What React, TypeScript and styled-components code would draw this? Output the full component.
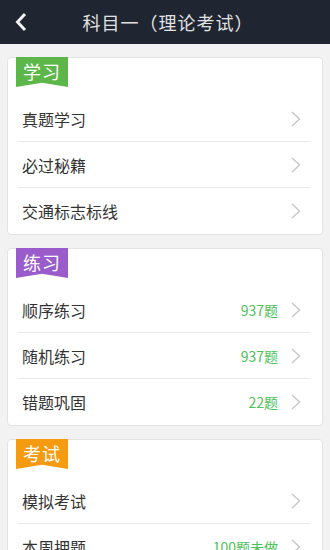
import React from 'react'
import styled, { createGlobalStyle } from 'styled-components'

type Item = { name: string; count?: string }
type Section = { title: string; color: string; items: Item[] }

const sections: Section[] = [
    { title: '学习', color: '#5db64a', items: [{ name: '真题学习' }, { name: '必过秘籍' }, { name: '交通标志标线' }] },
    { title: '练习', color: '#9b5ccb', items: [{ name: '顺序练习', count: '937题' }, { name: '随机练习', count: '937题' }, { name: '错题巩固', count: '22题' }] },
    { title: '考试', color: '#f59b12', items: [{ name: '模拟考试' }, { name: '本周押题', count: '100题未做' }] },
]

const GlobalStyle = createGlobalStyle`
    html, body { margin: 0; padding: 0; }
    body {
        font-family: "Noto Sans CJK SC", "Noto Sans", sans-serif;
        background: #f2f2f2;
    }
`

const Page = styled.div`
    width: 330px;
    height: 550px;
    overflow: hidden;
    background: #f2f2f2;
    display: flex;
    flex-direction: column;
`

const TopBar = styled.div`
    position: relative;
    height: 44px;
    flex-shrink: 0;
    background: #1f2531;
    display: flex;
    align-items: center;
    justify-content: center;
    padding-left: 6px;
    color: #e2e2e2;
    font-size: 18px;
    letter-spacing: 1px;

    .back {
        position: absolute;
        left: 14px;
        top: 12px;
    }
`

const Content = styled.div`
    display: flex;
    flex-direction: column;
    gap: 13px;
    padding: 13px 7px 0;
`

const Card = styled.div`
    background: #fff;
    border: 1px solid #e3e3e3;
    border-radius: 4px;
    display: flex;
    flex-direction: column;
    padding-bottom: 1px;
`

const Ribbon = styled.div<{ $color: string }>`
    width: 52px;
    height: 30px;
    margin-left: 8px;
    margin-top: -1px;
    background: ${p => p.$color};
    clip-path: polygon(0 0, 100% 0, 100% 100%, 50% 86%, 0 100%);
    color: #fff;
    font-size: 18px;
    line-height: 28px;
    text-align: center;
    letter-spacing: 1px;
`

const List = styled.div`
    margin-top: 9px;
    display: flex;
    flex-direction: column;
`

const Row = styled.div`
    height: 45px;
    margin: 0 12px 0 10px;
    padding: 0 8px 0 4px;
    display: flex;
    align-items: center;
    & + & {
        border-top: 1px solid #e8e8e8;
    }

    .name {
        flex: 1;
        font-size: 16px;
        color: #333;
    }
    .count {
        font-size: 14px;
        color: #4cc25a;
        margin-right: 12px;
    }
`

const Chevron = () => (
    <svg width="12" height="18" viewBox="0 0 12 18">
        <path d="M2 2 L9.5 9 L2 16" fill="none" stroke="#cacaca" strokeWidth="1.6" />
    </svg>
)

export default function App() {
    return (
        <Page>
            <GlobalStyle />
            <TopBar>
                <svg className="back" width="16" height="20" viewBox="0 0 16 20">
                    <path d="M11 2 L3.5 10 L11 18" fill="none" stroke="#f2f2f2" strokeWidth="3" />
                </svg>
                科目一（理论考试）
            </TopBar>
            <Content>
                {sections.map(sec => (
                    <Card key={sec.title}>
                        <Ribbon $color={sec.color}>{sec.title}</Ribbon>
                        <List>
                            {sec.items.map(item => (
                                <Row key={item.name}>
                                    <span className="name">{item.name}</span>
                                    {item.count && <span className="count">{item.count}</span>}
                                    <Chevron />
                                </Row>
                            ))}
                        </List>
                    </Card>
                ))}
            </Content>
        </Page>
    )
}
